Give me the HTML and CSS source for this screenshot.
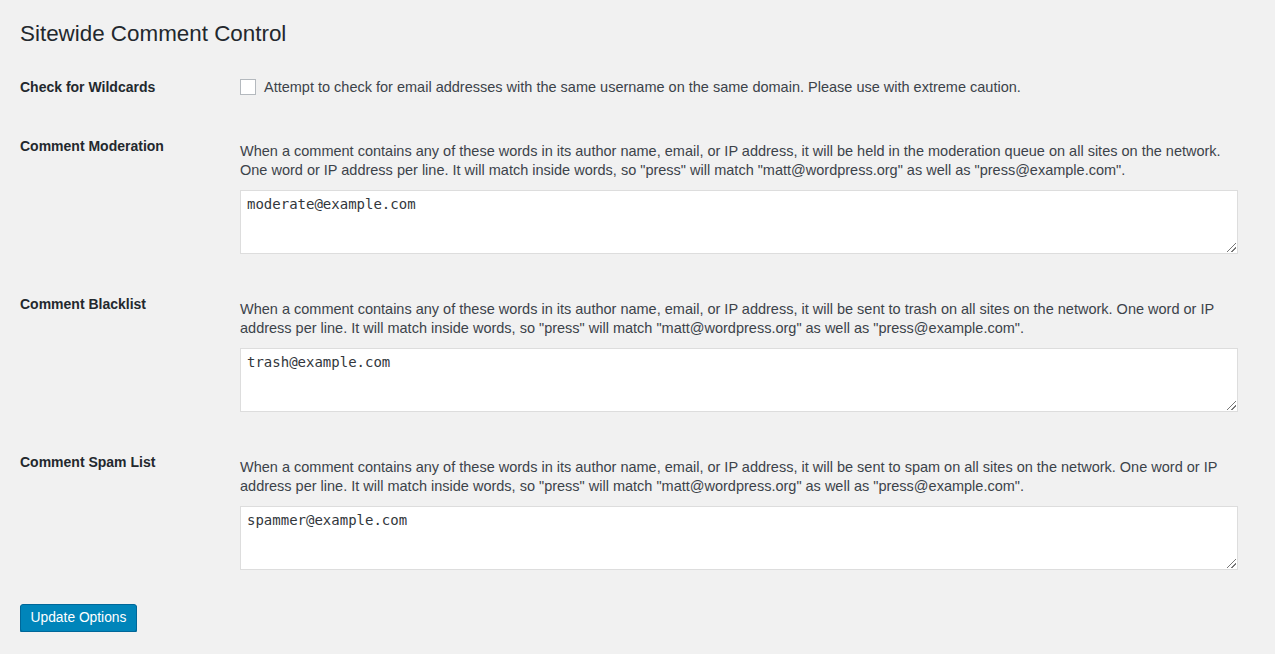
FILE: index.html
```html
<!DOCTYPE html>
<html lang="en">
<head>
<meta charset="utf-8">
<title>Sitewide Comment Control</title>
<link rel="stylesheet" href="styles.css">
</head>
<body>
<div class="wrap">
  <h2 class="title">Sitewide Comment Control</h2>
  <div class="form-table">
    <div class="row row-short">
      <div class="th">Check for Wildcards</div>
      <div class="td">
        <label class="check-label"><span class="checkbox"></span>Attempt to check for email addresses with the same username on the same domain. Please use with extreme caution.</label>
      </div>
    </div>
    <div class="row">
      <div class="th">Comment Moderation</div>
      <div class="td">
        <p class="desc">When a comment contains any of these words in its author name, email, or IP address, it will be held in the moderation queue on all sites on the network. One word or IP address per line. It will match inside words, so "press" will match "matt@wordpress.org" as well as "press@example.com".</p>
        <div class="textarea">moderate@example.com<span class="grip"></span></div>
      </div>
    </div>
    <div class="row">
      <div class="th">Comment Blacklist</div>
      <div class="td">
        <p class="desc">When a comment contains any of these words in its author name, email, or IP address, it will be sent to trash on all sites on the network. One word or IP address per line. It will match inside words, so "press" will match "matt@wordpress.org" as well as "press@example.com".</p>
        <div class="textarea">trash@example.com<span class="grip"></span></div>
      </div>
    </div>
    <div class="row">
      <div class="th">Comment Spam List</div>
      <div class="td">
        <p class="desc">When a comment contains any of these words in its author name, email, or IP address, it will be sent to spam on all sites on the network. One word or IP address per line. It will match inside words, so "press" will match "matt@wordpress.org" as well as "press@example.com".</p>
        <div class="textarea">spammer@example.com<span class="grip"></span></div>
      </div>
    </div>
  </div>
  <div class="submit">
    <button class="button-primary" type="button">Update Options</button>
  </div>
</div>
</body>
</html>
```

FILE: styles.css
```css
html, body {
  margin: 0;
  padding: 0;
  background: #f1f1f1;
}
body {
  font-family: "Liberation Sans", Arial, sans-serif;
  font-size: 14px;
  color: #23282d;
}
.wrap {
  padding: 0 20px;
}
.title {
  margin: 0;
  padding-top: 20px;
  height: 58px;
  font-size: 22.4px;
  line-height: 28px;
  font-weight: 400;
  color: #23282d;
  box-sizing: border-box;
}
.form-table {
  display: flex;
  flex-direction: column;
}
.row {
  display: grid;
  grid-template-columns: 220px 1fr;
}
.th {
  padding: 20px 0 20px 0;
  line-height: 18px;
  font-weight: 700;
  color: #23282d;
}
.td {
  padding: 25px 17px 21px 0;
  color: #3c434a;
  font-size: 14.5px;
}
.row-short .td {
  padding: 20px 0 21px 0;
}
.check-label {
  display: flex;
  align-items: center;
  line-height: 18px;
}
.checkbox {
  width: 14px;
  height: 14px;
  border: 1px solid #b4b9be;
  background: #fff;
  margin-right: 8px;
  flex: none;
}
.desc {
  margin: 0 0 10px 0;
  line-height: 19px;
}
.textarea {
  position: relative;
  border: 1px solid #ddd;
  background: #fff;
  padding: 5px 6px;
  box-sizing: border-box;
  height: 64px;
  font-family: "DejaVu Sans Mono", "Liberation Mono", monospace;
  font-size: 14px;
  line-height: 16px;
  color: #32373c;
}
.grip {
  position: absolute;
  right: 1px;
  bottom: 1px;
  width: 9px;
  height: 9px;
  background:
    linear-gradient(135deg, transparent 45%, #777 45%, #777 55%, transparent 55%, transparent 72%, #777 72%, #777 80%, transparent 80%);
}
.submit {
  padding-top: 13px;
}
.button-primary {
  font-family: "Liberation Sans", Arial, sans-serif;
  font-size: 13.8px;
  color: #fff;
  background: #0085ba;
  border: 1px solid #006799;
  border-radius: 3px;
  height: 28px;
  padding: 0 8px;
  width: 117px;
  line-height: 26px;
  box-shadow: 0 1px 0 #006799;
}
```
